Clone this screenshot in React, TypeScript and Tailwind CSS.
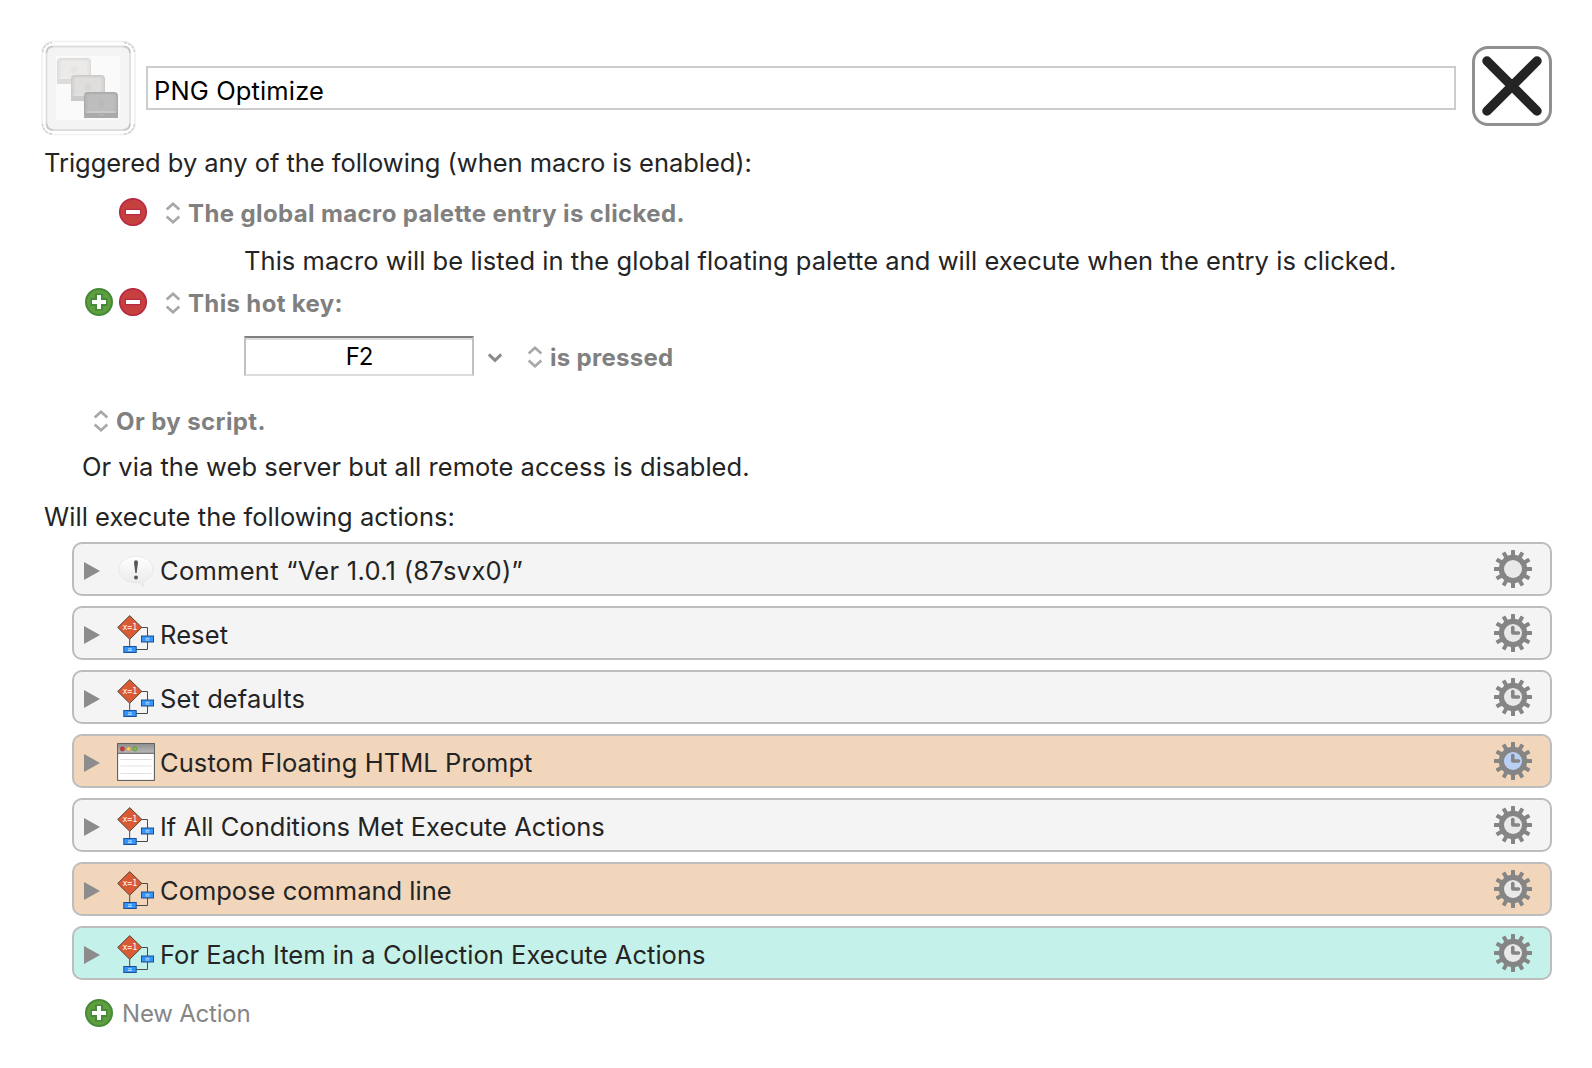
import type { ReactNode } from 'react';

function Tile({ x, y, body, edge, screen, glow }: { x: number; y: number; body: string; edge: string; screen: string; glow: string }) {
  return (
    <g transform={`translate(${x} ${y})`}>
      <path d="M0 26V4a4 4 0 0 1 4-4h26a4 4 0 0 1 4 4v22z" fill={edge} />
      <path d="M1.5 20.5V4.5a3 3 0 0 1 3-3h25a3 3 0 0 1 3 3v16z" fill={body} />
      <rect x="4" y="3" width="26" height="17" rx="1" fill={screen} />
      <rect x="2.5" y="19.6" width="29" height="1" fill={glow} />
      <circle cx="17" cy="12" r="3.4" fill={body} />
      <rect x="14" y="22.4" width="6" height="1" fill={body} />
    </g>
  );
}

function MacroIcon() {
  return (
    <svg width="96" height="96" viewBox="0 0 96 96" className="shrink-0">
      <rect x="2" y="1.500" width="93" height="93" rx="11" fill="#fff" stroke="#f0f0f0" strokeWidth="1.600" />
      <path d="M2.500 12Q4 4 12 2.500M84 2.500Q93 4 94.500 12M94.500 84Q93 93 84 94M12 94Q4 93 2.500 84" fill="none" stroke="#cfcfcf" strokeWidth="1.500" strokeDasharray="3 1.200" />
      <rect x="6.500" y="6.500" width="83.500" height="83.500" rx="7" fill="#f4f4f4" stroke="#dedede" strokeWidth="1.800" />
      <path d="M6.500 13Q6.500 6.500 13 6.500M83.500 6.500Q90 6.500 90 13M90 83.500Q90 90 83.500 90M13 90Q6.500 90 6.500 83.500" fill="none" stroke="#c6c6c6" strokeWidth="1.600" />
      <rect x="16" y="16" width="64" height="64" fill="#fafafa" />
      <Tile x={17} y={18} body="#e6e5e3" edge="#dddcda" screen="#ebeae8" glow="#f3f3f2" />
      <Tile x={31} y={35} body="#d8d7d5" edge="#cccbca" screen="#dfdedc" glow="#ececea" />
      <Tile x={44} y={52} body="#b9b9b9" edge="#aaaaaa" screen="#bdbdbd" glow="#dcdcdc" />
    </svg>
  );
}

function Minus() {
  return (
    <svg width="28" height="28" viewBox="0 0 28 28" className="-mt-0.5 shrink-0">
      <circle cx="14" cy="14" r="13.2" fill="#c6403f" stroke="#b72b42" strokeWidth="1.7" />
      <rect x="6" y="10.800" width="16" height="6.400" fill="#b72b42" />
      <rect x="7" y="12" width="14" height="4" fill="#fff" />
    </svg>
  );
}

function Plus() {
  return (
    <svg width="28" height="28" viewBox="0 0 28 28" className="-mt-0.5 shrink-0">
      <circle cx="14" cy="14" r="13" fill="#5f9e3e" stroke="#468a38" strokeWidth="2" />
      <path d="M10 5.500h8v4.500h4.500v8H18v4.500h-8V18H5.500v-8H10z" fill="#468a38" />
      <path d="M12 7h4v5h5v4h-5v5h-4v-5H7v-4h5z" fill="#fff" />
    </svg>
  );
}

function UpDown() {
  return (
    <svg width="14" height="22" viewBox="0 0 14 22" className="shrink-0" fill="none" stroke="#a8a8a8" strokeWidth="2.700">
      <path d="M.7 7.500L7 1.800l6.300 5.700M.7 14.500L7 20.200l6.300-5.700" />
    </svg>
  );
}

function Flow() {
  return (
    <svg width="38" height="38" viewBox="0 0 38 38">
      <path d="M25 12.500h5.500V34.500H19M12.700 24v8" fill="none" stroke="#4a4a4a" strokeWidth="1" />
      <path d="M12.700.6L24.800 12.400 12.700 24.300.7 12.400z" fill="#d95b35" stroke="#4d3b35" strokeWidth="0.9" />
      <text x="12.800" y="15.100" textAnchor="middle" fontSize="8.200" fill="#fff" className="font-['DejaVu_Sans_Mono',monospace]">x=1</text>
      <rect x="24.500" y="21" width="12" height="6" fill="#3395fb" stroke="#1f4f8c" />
      <rect x="6.800" y="31.500" width="12.400" height="6" fill="#3395fb" stroke="#1f4f8c" />
      <path d="M28.500 23.300h4M28.500 25h4M11 33.800h4M11 35.500h4" stroke="#c3e0ff" strokeWidth="0.9" />
    </svg>
  );
}

function Bubble() {
  return (
    <svg width="38" height="38" viewBox="0 0 38 38">
      <defs>
        <linearGradient id="bubble" x1="0" y1="0" x2="0" y2="1">
          <stop offset="0" stopColor="#ffffff" />
          <stop offset="1" stopColor="#e9e9e9" />
        </linearGradient>
      </defs>
      <path d="M19 5.500C9.500 5.500 1.800 11 1.800 18.500S9.500 31.500 19 31.500c1 0 2 0 3-.2 1.400 1.800 2.600 2.900 4.400 3.900-.5-1.700-.5-3.400-.3-4.900C32 28.300 36 24 36 18.500 36 11 28.500 5.500 19 5.500z" fill="url(#bubble)" stroke="#e2e2e2" strokeWidth="0.7" />
      <path d="M17 11.200a2 2 0 0 1 4 0c0 1.800-.9 6-1.300 10.800h-1.400c-.4-4.800-1.300-9-1.300-10.800z" fill="#585858" />
      <circle cx="19" cy="26.500" r="2" fill="#585858" />
    </svg>
  );
}

function Browser() {
  return (
    <svg width="38" height="38" viewBox="0 0 38 38">
      <defs>
        <linearGradient id="bar" x1="0" y1="0" x2="0" y2="1">
          <stop offset="0" stopColor="#8f8f8f" />
          <stop offset="1" stopColor="#b9b9b9" />
        </linearGradient>
      </defs>
      <rect x=".6" y=".6" width="36.800" height="36.800" fill="#fff" stroke="#555" strokeWidth="1" />
      <rect x="1" y="1" width="36" height="9" fill="url(#bar)" />
      <path d="M1 10.300h36" stroke="#555" strokeWidth="1" />
      <circle cx="5.400" cy="5.900" r="2.200" fill="#d03a37" stroke="#96302e" strokeWidth="0.5" />
      <circle cx="11.600" cy="5.900" r="2.200" fill="#f5cf72" stroke="#a4863c" strokeWidth="0.5" />
      <circle cx="17.800" cy="5.900" r="2.200" fill="#7cc043" stroke="#4e7c2a" strokeWidth="0.5" />
      <path d="M3.500 16.500h31M3.500 23h31M3.500 30.500h31" stroke="#e0e0e0" strokeWidth="1.200" />
    </svg>
  );
}

const TEETH = [0, 30, 60, 90, 120, 150];

function Gear({ face, clock }: { face: string; clock: boolean }) {
  return (
    <svg width="38" height="38" viewBox="-19 -19 38 38" className="shrink-0">
      {TEETH.map((a) => (
        <rect key={a} x="-2" y="-19" width="4" height="38" rx="0.6" fill="#858585" transform={`rotate(${a})`} />
      ))}
      <circle r="14.200" fill="#858585" />
      <circle r="9" fill={face} />
      {clock && <path d="M-.2-5.500V0H5.500" fill="none" stroke="#858585" strokeWidth="3.600" strokeLinecap="round" strokeLinejoin="round" />}
    </svg>
  );
}

type Action = { label: string; track: string; bg: string; icon: ReactNode; face: string; clock: boolean };

const ACTIONS: Action[] = [
  { label: 'Comment “Ver 1.0.1 (87svx0)”', track: 'tracking-[0.28px]', bg: 'bg-[#f4f4f4]', icon: <Bubble />, face: '#e9e9e9', clock: false },
  { label: 'Reset', track: 'tracking-[0.1px]', bg: 'bg-[#f4f4f4]', icon: <Flow />, face: '#e9e9e9', clock: true },
  { label: 'Set defaults', track: 'tracking-[0.1px]', bg: 'bg-[#f4f4f4]', icon: <Flow />, face: '#e9e9e9', clock: true },
  { label: 'Custom Floating HTML Prompt', track: 'tracking-[0.07px]', bg: 'bg-[#f1d6bb]', icon: <Browser />, face: '#b9cff3', clock: true },
  { label: 'If All Conditions Met Execute Actions', track: 'tracking-[0.02px]', bg: 'bg-[#f4f4f4]', icon: <Flow />, face: '#e9e9e9', clock: true },
  { label: 'Compose command line', track: 'tracking-normal', bg: 'bg-[#f1d6bb]', icon: <Flow />, face: '#e9e9e9', clock: true },
  { label: 'For Each Item in a Collection Execute Actions', track: 'tracking-[0.04px]', bg: 'bg-[#c4f1e9]', icon: <Flow />, face: '#e9e9e9', clock: true },
];

function ActionRow({ a }: { a: Action }) {
  return (
    <li className={`flex h-[54px] items-center rounded-[10px] border-2 border-[#bdbdbd] pr-[18px] pl-2.5 ${a.bg}`}>
      <svg width="16" height="18" viewBox="0 0 16 18" className="mt-1 shrink-0">
        <path d="M0 0l16 9L0 18z" fill="#8c8c8c" />
      </svg>
      <span className="mt-0.5 ml-[17px] shrink-0">{a.icon}</span>
      <span className={`mt-[3px] ml-[5px] flex-1 ${a.track}`}>{a.label}</span>
      <Gear face={a.face} clock={a.clock} />
    </li>
  );
}

export default function App() {
  return (
    <main className="h-[1068px] w-[1592px] overflow-hidden bg-white pt-10 font-['Inter',sans-serif] text-[25.5px] leading-8 whitespace-nowrap text-[#242424]">
      <header className="flex h-24 items-center pr-10 pl-10">
        <MacroIcon />
        <div className="ml-2.5 flex h-11 w-[1310px] items-center border-2 border-[#cccccc] pt-1.5 pl-1.5 tracking-[0.13px] text-black">PNG Optimize</div>
        <button className="-mt-1 ml-4 flex size-20 shrink-0 items-center justify-center rounded-[16px] border-3 border-[#909090]">
          <svg width="60" height="60" viewBox="0 0 60 60" stroke="#242424" strokeWidth="9.500" strokeLinecap="round">
            <path d="M5 5l50 50M55 5L5 55" />
          </svg>
        </button>
      </header>

      <p className="mt-[11px] pl-11 tracking-[-0.035px]">Triggered by any of the following (when macro is enabled):</p>

      <div className="mt-[18px] flex h-8 items-center pl-[119px]">
        <Minus />
        <span className="ml-[19px]"><UpDown /></span>
        <span className="mt-0.5 ml-2 text-2xl leading-8 font-bold tracking-[0.38px] text-[#808080]">The global macro palette entry is clicked.</span>
      </div>
      <p className="mt-4 pl-[244px] tracking-[0.05px]">This macro will be listed in the global floating palette and will execute when the entry is clicked.</p>

      <div className="mt-2.5 flex h-8 items-center pl-[85px]">
        <Plus />
        <span className="ml-1.5"><Minus /></span>
        <span className="ml-[19px]"><UpDown /></span>
        <span className="mt-0.5 ml-2 text-2xl leading-8 font-bold tracking-[0.35px] text-[#808080]">This hot key:</span>
      </div>

      <div className="mt-[17px] flex h-10 items-center pl-[244px]">
        <div className="flex h-10 w-[230px] items-center justify-center border-2 border-t-[#808080] border-r-[#c0c0c0] border-b-[#dcdcdc] border-l-[#c0c0c0] pt-0.5 text-2xl tracking-[-1.2px] text-black shadow-[inset_0_2px_0_#dedede]">F2</div>
        <svg width="14" height="10" viewBox="0 0 14 10" className="mt-1 ml-3.5" fill="none" stroke="#8c8c8c" strokeWidth="3.100">
          <path d="M.8 1.500L7 7.300l6.200-5.800" />
        </svg>
        <span className="mt-0.5 ml-[26px]"><UpDown /></span>
        <span className="mt-1 ml-2 text-2xl leading-8 font-bold tracking-[0.3px] text-[#808080]">is pressed</span>
      </div>

      <div className="mt-[29px] flex h-8 items-center pl-[94px]">
        <UpDown />
        <span className="mt-0.5 ml-2 text-2xl leading-8 font-bold tracking-[0.4px] text-[#808080]">Or by script.</span>
      </div>
      <p className="mt-3.5 pl-[82px] tracking-[0.03px]">Or via the web server but all remote access is disabled.</p>

      <p className="mt-[18px] pl-11 tracking-[0.05px]">Will execute the following actions:</p>

      <ul className="mt-[9px] flex flex-col gap-2.5 pr-10 pl-[72px]">
        {ACTIONS.map((a) => (
          <ActionRow key={a.label} a={a} />
        ))}
      </ul>

      <div className="mt-[18px] flex h-8 items-center pl-[85px]">
        <Plus />
        <span className="ml-[9px] text-2xl leading-8 tracking-[-0.2px] text-[#868686]">New Action</span>
      </div>
    </main>
  );
}
